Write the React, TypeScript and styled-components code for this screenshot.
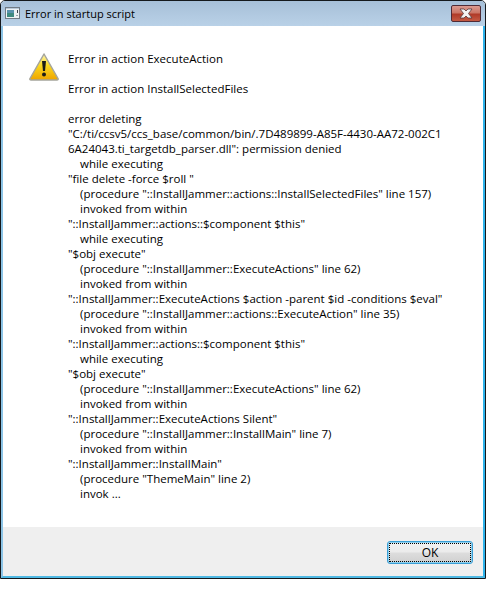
import React from "react";
import styled, { createGlobalStyle } from "styled-components";

const GlobalStyle = createGlobalStyle`
  html, body {
    margin: 0;
    padding: 0;
    background: #ffffff;
  }
`;

const lines: { text: string; indent?: boolean }[] = [
  { text: "Error in action ExecuteAction" },
  { text: "" },
  { text: "Error in action InstallSelectedFiles" },
  { text: "" },
  { text: "error deleting" },
  { text: "\"C:/ti/ccsv5/ccs_base/common/bin/.7D489899-A85F-4430-AA72-002C1" },
  { text: "6A24043.ti_targetdb_parser.dll\": permission denied" },
  { text: "while executing", indent: true },
  { text: "\"file delete -force $roll \"" },
  { text: "(procedure \"::InstallJammer::actions::InstallSelectedFiles\" line 157)", indent: true },
  { text: "invoked from within", indent: true },
  { text: "\"::InstallJammer::actions::$component $this\"" },
  { text: "while executing", indent: true },
  { text: "\"$obj execute\"" },
  { text: "(procedure \"::InstallJammer::ExecuteActions\" line 62)", indent: true },
  { text: "invoked from within", indent: true },
  { text: "\"::InstallJammer::ExecuteActions $action -parent $id -conditions $eval\"" },
  { text: "(procedure \"::InstallJammer::actions::ExecuteAction\" line 35)", indent: true },
  { text: "invoked from within", indent: true },
  { text: "\"::InstallJammer::actions::$component $this\"" },
  { text: "while executing", indent: true },
  { text: "\"$obj execute\"" },
  { text: "(procedure \"::InstallJammer::ExecuteActions\" line 62)", indent: true },
  { text: "invoked from within", indent: true },
  { text: "\"::InstallJammer::ExecuteActions Silent\"" },
  { text: "(procedure \"::InstallJammer::InstallMain\" line 7)", indent: true },
  { text: "invoked from within", indent: true },
  { text: "\"::InstallJammer::InstallMain\"" },
  { text: "(procedure \"ThemeMain\" line 2)", indent: true },
  { text: "invok ...", indent: true },
];

export default function App() {
  return (
    <>
      <GlobalStyle />
      <Dialog>
        <TitleBar>
          <AppIcon width="15" height="12" viewBox="0 0 15 12">
            <rect x="0.5" y="0.5" width="14" height="11" fill="#eef2f4" stroke="#717b85" />
            <rect x="1" y="1" width="13" height="1" fill="#b9c9d8" />
            <rect x="2" y="3" width="7" height="7" fill="#3f8a80" />
            <rect x="2" y="3" width="7" height="3" fill="#5a93ad" />
            <rect x="12" y="3" width="1" height="3" fill="#39424c" />
            <rect x="11" y="8" width="2" height="1" fill="#9aa6b0" />
          </AppIcon>
          <Title>Error in startup script</Title>
          <CloseButton>
            <svg width="16" height="11" viewBox="0 0 16 11">
              <path
                d="M2 1h4l2 2 2-2h4l-3.500 4.500L14 10h-4L8 8l-2 2H2l3.500-4.500z"
                fill="#f4f2f2"
                stroke="#54383c"
                strokeWidth="0.8"
              />
            </svg>
          </CloseButton>
        </TitleBar>
        <Frame>
          <Content>
            <WarningIcon width="30" height="28" viewBox="0 0 30 28">
              <defs>
                <linearGradient id="warnFill" x1="0" y1="0" x2="0" y2="1">
                  <stop offset="0" stopColor="#fff6b0" />
                  <stop offset="0.45" stopColor="#fbd81e" />
                  <stop offset="1" stopColor="#eea400" />
                </linearGradient>
              </defs>
              <path
                d="M15 1 L29 25.500 Q29.500 27 28 27 L2 27 Q0.500 27 1 25.500 Z"
                fill="url(#warnFill)"
                stroke="#a5a59c"
                strokeWidth="1.500"
                strokeLinejoin="round"
              />
              <path d="M13 8 h4 l-1 10 h-2 z" fill="#1c1c18" />
              <circle cx="15" cy="21.500" r="2" fill="#1c1c18" />
            </WarningIcon>
            <Message>
              {lines.map((line, index) => (
                <Line key={index} $indent={line.indent}>
                  {line.text}
                </Line>
              ))}
            </Message>
          </Content>
          <Footer>
            <OkButton>OK</OkButton>
          </Footer>
        </Frame>
      </Dialog>
    </>
  );
}

const Dialog = styled.div`
  box-sizing: border-box;
  display: flex;
  flex-direction: column;
  width: 486px;
  height: 579px;
  border: 1px solid #14181c;
  border-radius: 5px 5px 0 0;
  background: #ffffff;
  font-family: "Open Sans", "Liberation Sans", sans-serif;
  color: #000000;
`;

const TitleBar = styled.div`
  display: flex;
  flex: none;
  align-items: flex-start;
  height: 25px;
  padding: 0 4px 0 4px;
  border-radius: 4px 4px 0 0;
  background: linear-gradient(to bottom, #a6bfd8 0%, #b2cae1 60%, #b9d1e7 100%);
`;

const AppIcon = styled.svg`
  flex: none;
  margin-top: 6px;
`;

const Title = styled.div`
  flex: 1;
  margin: 5px 0 0 5px;
  font-size: 11px;
  line-height: 16px;
`;

const CloseButton = styled.div`
  box-sizing: border-box;
  display: flex;
  align-items: center;
  justify-content: center;
  width: 30px;
  height: 17px;
  margin-top: 4px;
  border: 1px solid #4f2b36;
  border-radius: 2px;
  background: linear-gradient(to bottom, #dc9a90 0%, #cb7666 45%, #b03a28 55%, #c45a44 100%);
`;

const Frame = styled.div`
  display: flex;
  flex: 1;
  flex-direction: column;
  border-style: solid;
  border-width: 0 2px 2px 2px;
  border-color: #38b0e4 #2eb2ea #4fb9e4 #8cc4e6;
`;

const Content = styled.div`
  display: flex;
  flex: 1;
  align-items: flex-start;
  padding: 25px 0 0 26px;
`;

const WarningIcon = styled.svg`
  flex: none;
  margin-top: 2px;
`;

const Message = styled.div`
  margin-left: 9px;
  font-size: 11.5px;
  line-height: 15px;
`;

const Line = styled.div<{ $indent?: boolean }>`
  min-height: 15px;
  padding-left: ${(props) => (props.$indent ? "12px" : "0")};
  white-space: nowrap;
`;

const Footer = styled.div`
  box-sizing: border-box;
  display: flex;
  flex: none;
  justify-content: flex-end;
  align-items: flex-start;
  height: 49px;
  padding: 14px 10px 0 0;
  background: #efefef;
`;

const OkButton = styled.button`
  box-sizing: border-box;
  width: 86px;
  height: 23px;
  padding: 0;
  border: 1px solid #3a9fd6;
  border-radius: 3px;
  box-shadow: inset 0 0 0 1px #8fd0ee;
  outline: 1px dotted #000000;
  outline-offset: -3px;
  background: linear-gradient(to bottom, #f2f2f2 0%, #ebebeb 48%, #dddddd 52%, #cfcfcf 100%);
  font-family: "Open Sans", "Liberation Sans", sans-serif;
  font-size: 12px;
  color: #000000;
`;
